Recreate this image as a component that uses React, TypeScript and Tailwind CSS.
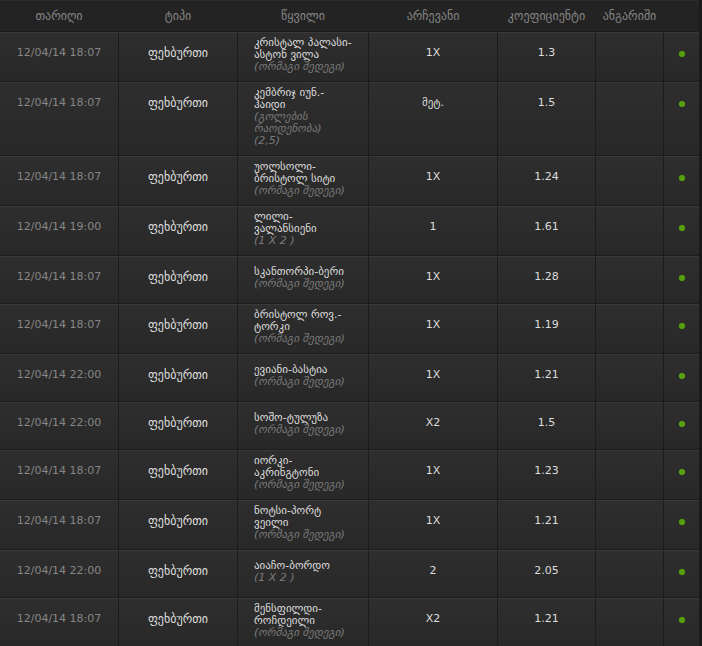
import React from "react";

type Row = {
  date: string;
  lines: string[];
  subs: string[];
  choice: string;
  coef: string;
};

const rows: Row[] = [
  { date: "12/04/14 18:07", lines: ["კრისტალ პალასი-", "ასტონ ვილა"], subs: ["(ორმაგი შედეგი)"], choice: "1X", coef: "1.3" },
  { date: "12/04/14 18:07", lines: ["კემბრიჯ იუნ.-", "ჰაიდი"], subs: ["(გოლების", "რაოდენობა)", "(2,5)"], choice: "მეტ.", coef: "1.5" },
  { date: "12/04/14 18:07", lines: ["უოლსოლი-", "ბრისტოლ სიტი"], subs: ["(ორმაგი შედეგი)"], choice: "1X", coef: "1.24" },
  { date: "12/04/14 19:00", lines: ["ლილი-", "ვალანსიენი"], subs: ["(1 X 2 )"], choice: "1", coef: "1.61" },
  { date: "12/04/14 18:07", lines: ["სკანთორპი-ბერი"], subs: ["(ორმაგი შედეგი)"], choice: "1X", coef: "1.28" },
  { date: "12/04/14 18:07", lines: ["ბრისტოლ როვ.-", "ტორკი"], subs: ["(ორმაგი შედეგი)"], choice: "1X", coef: "1.19" },
  { date: "12/04/14 22:00", lines: ["ევიანი-ბასტია"], subs: ["(ორმაგი შედეგი)"], choice: "1X", coef: "1.21" },
  { date: "12/04/14 22:00", lines: ["სოშო-ტულუზა"], subs: ["(ორმაგი შედეგი)"], choice: "X2", coef: "1.5" },
  { date: "12/04/14 18:07", lines: ["იორკი-", "აკრინგტონი"], subs: ["(ორმაგი შედეგი)"], choice: "1X", coef: "1.23" },
  { date: "12/04/14 18:07", lines: ["ნოტსი-პორტ", "ვეილი"], subs: ["(ორმაგი შედეგი)"], choice: "1X", coef: "1.21" },
  { date: "12/04/14 22:00", lines: ["აიაჩო-ბორდო"], subs: ["(1 X 2 )"], choice: "2", coef: "2.05" },
  { date: "12/04/14 18:07", lines: ["მენსფილდი-", "როჩდეილი"], subs: ["(ორმაგი შედეგი)"], choice: "X2", coef: "1.21" },
];

const cell =
  "bg-gradient-to-b from-[#2e2e2e] to-[#282828] border-t border-[#393939]";

const cols = "grid grid-cols-[118px_118px_130px_128px_97px_67px_35px] gap-x-px";

export default function App() {
  return (
    <div
      className="w-[702px] bg-[#1c1c1c] text-[11px] leading-[12px]"
      style={{ fontFamily: '"DejaVu Sans", "Noto Sans", sans-serif' }}
    >
      <div className="w-[702px] border-r-[3px] border-[#1a1a1a]">
        {/* header */}
        <div
          className={`${cols} h-[32px] bg-[#232323] border-t border-[#2c2c2c] border-b border-b-[#1b1b1b] items-center text-[12px] text-[#858585]`}
        >
          <div className="text-center">თარიღი</div>
          <div className="text-center">ტიპი</div>
          <div className="text-center">წყვილი</div>
          <div className="text-center">არჩევანი</div>
          <div className="text-center">კოეფიციენტი</div>
          <div className="text-center">ანგარიში</div>
          <div />
        </div>

        {/* body */}
        <div className={`${cols} gap-y-px bg-[#1c1c1c]`}>
          {rows.map((r, i) => (
            <React.Fragment key={i}>
              <div className={`${cell} pt-[14px] text-center text-[#868686]`}>{r.date}</div>
              <div className={`${cell} pt-[14px] text-center text-[12px] text-[#dedede]`}>ფეხბურთი</div>
              <div
                className={`${cell} min-h-[47px] pl-[16px] pr-[2px] pt-[4px] pb-[8px] flex flex-col justify-center`}
              >
                {r.lines.map((l, j) => (
                  <div key={j} className="text-[#dcdcdc] whitespace-nowrap">
                    {l}
                  </div>
                ))}
                {r.subs.map((s, j) => (
                  <div key={`s${j}`} className="text-[#7a7a7a] italic whitespace-nowrap">
                    {s}
                  </div>
                ))}
              </div>
              <div className={`${cell} pt-[14px] text-center text-[#dcdcdc]`}>{r.choice}</div>
              <div className={`${cell} pt-[14px] text-center text-[#dcdcdc]`}>{r.coef}</div>
              <div className={cell} />
              <div className={`${cell} pt-[18px] flex justify-center`}>
                <div className="w-[6px] h-[6px] rounded-full bg-[#56a010] shadow-[0_0_1px_#3a6a0a]" />
              </div>
            </React.Fragment>
          ))}
        </div>
      </div>
    </div>
  );
}
